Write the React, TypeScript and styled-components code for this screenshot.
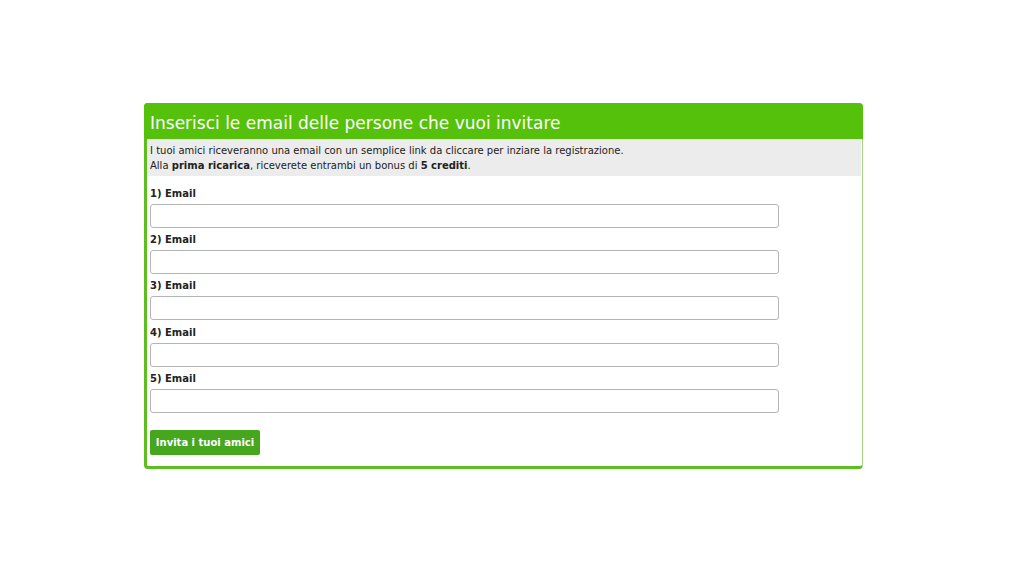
import styled, { createGlobalStyle } from "styled-components"

const GlobalStyle = createGlobalStyle`
  html, body {
    margin: 0;
    padding: 0;
    background: #ffffff;
    font-family: "DejaVu Sans", Verdana, sans-serif;
  }
`

const Page = styled.div`
  width: 1024px;
  height: 576px;
  padding-top: 103px;
  padding-left: 144px;
  box-sizing: border-box;
`

const Card = styled.div`
  width: 719px;
  box-sizing: border-box;
  border-left: 3px solid #5cbf1f;
  border-right: 1px solid #a8d48a;
  border-bottom: 3px solid #5cbf1f;
  border-radius: 4px;
  background: #fff;
`

const Header = styled.div`
  background: #56c10a;
  height: 36px;
  margin-left: -3px;
  margin-right: -1px;
  border-radius: 4px 4px 0 0;
  display: flex;
  align-items: center;
  padding-left: 6px;
  padding-top: 3px;
  box-sizing: border-box;
  color: #fff;
  font-size: 17px;
`

const Info = styled.div`
  background: #ececec;
  padding: 4px 3px 3px;
  font-size: 10px;
  line-height: 15px;
  color: #222;
  margin-right: 1px;
`

const Form = styled.form`
  padding: 11px 0 11px 3px;
  display: flex;
  flex-direction: column;
`

const Field = styled.div`
  display: flex;
  flex-direction: column;
  align-items: flex-start;
  margin-bottom: 5.2px;
`

const Label = styled.label`
  display: block;
  font-size: 10px;
  font-weight: bold;
  color: #222;
  line-height: 14px;
  height: 14px;
  margin-bottom: 3px;
`

const Input = styled.input`
  display: block;
  width: 629px;
  height: 24px;
  box-sizing: border-box;
  border: 1px solid #b5b5b5;
  border-radius: 3px;
  margin: 0;
  padding: 2px 4px;
  font: inherit;
`

const Button = styled.button`
  align-self: flex-start;
  margin-top: 12px;
  background: #46a61e;
  color: #fff;
  border: none;
  border-radius: 2px;
  height: 25px;
  width: 110px;
  padding: 0;
  font-family: "DejaVu Sans", Verdana, sans-serif;
  font-size: 10px;
  font-weight: bold;
`

const fields = [1, 2, 3, 4, 5]

const App = () => {
  return (
    <Page>
      <GlobalStyle />
      <Card>
        <Header>Inserisci le email delle persone che vuoi invitare</Header>
        <Info>
          I tuoi amici riceveranno una email con un semplice link da cliccare per inziare la registrazione.
          <br />
          Alla <b>prima ricarica</b>, riceverete entrambi un bonus di <b>5 crediti</b>.
        </Info>
        <Form>
          {fields.map((n) => (
            <Field key={n}>
              <Label htmlFor={`email${n}`}>{n}) Email</Label>
              <Input id={`email${n}`} type="text" />
            </Field>
          ))}
          <Button type="button">Invita i tuoi amici</Button>
        </Form>
      </Card>
    </Page>
  )
}

export default App
